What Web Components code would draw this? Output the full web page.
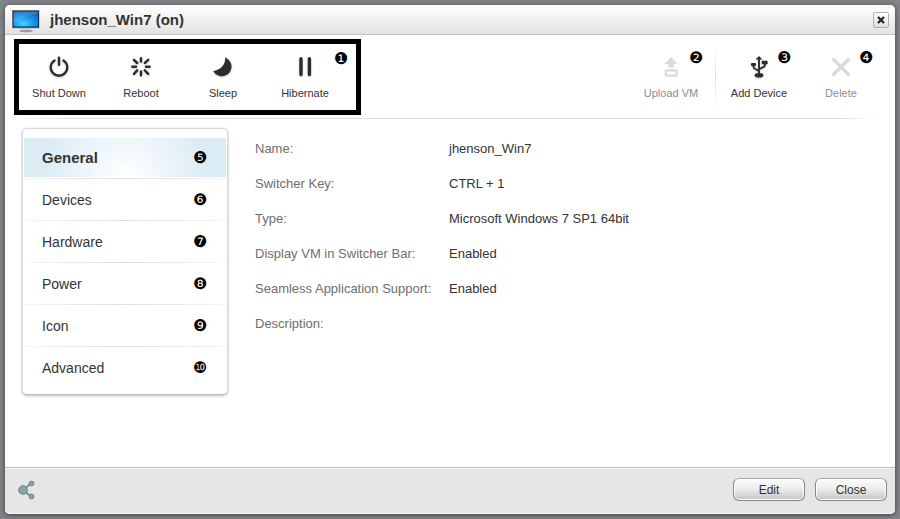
<!DOCTYPE html>
<html lang="en">
<head>
<meta charset="utf-8">
<title>jhenson_Win7 (on)</title>
<style>
html, body { height: 100%; }
body { margin: 0; font-family: "Liberation Sans", Arial, sans-serif; color: #333; background: #828387; }
</style>
</head>
<body>
<vm-window caption="jhenson_Win7 (on)">
  <vm-toolbar slot="toolbar">
    <vm-action icon="power" slot="power">Shut Down</vm-action>
    <vm-action icon="reboot" slot="power">Reboot</vm-action>
    <vm-action icon="sleep" slot="power">Sleep</vm-action>
    <vm-action icon="pause" slot="power">Hibernate</vm-action>
    <vm-badge slot="mark">❶</vm-badge>
    <vm-action icon="upload" mark="❷" disabled slot="publish">Upload VM</vm-action>
    <vm-action icon="usb" mark="❸" slot="manage">Add Device</vm-action>
    <vm-action icon="delete" mark="❹" disabled slot="manage">Delete</vm-action>
  </vm-toolbar>
  <vm-menu slot="menu">
    <vm-menu-item mark="❺" selected>General</vm-menu-item>
    <vm-menu-item mark="❻">Devices</vm-menu-item>
    <vm-menu-item mark="❼">Hardware</vm-menu-item>
    <vm-menu-item mark="❽">Power</vm-menu-item>
    <vm-menu-item mark="❾">Icon</vm-menu-item>
    <vm-menu-item mark="❿">Advanced</vm-menu-item>
  </vm-menu>
  <vm-details>
    <vm-field label="Name:">jhenson_Win7</vm-field>
    <vm-field label="Switcher Key:">CTRL + 1</vm-field>
    <vm-field label="Type:">Microsoft Windows 7 SP1 64bit</vm-field>
    <vm-field label="Display VM in Switcher Bar:">Enabled</vm-field>
    <vm-field label="Seamless Application Support:">Enabled</vm-field>
    <vm-field label="Description:"></vm-field>
  </vm-details>
  <vm-button slot="buttons">Edit</vm-button>
  <vm-button slot="buttons">Close</vm-button>
</vm-window>

<script>
const ICONS = {
  power: `<path d="M7.6 5.4A8.3 8.3 0 1 0 16.4 5.4" fill="none" stroke="currentColor" stroke-width="2.3" stroke-linecap="round"/><path d="M12 2.8V9.8" stroke="currentColor" stroke-width="2.4" stroke-linecap="round"/>`,
  reboot: `<g stroke="currentColor" stroke-width="2.5" stroke-linecap="round"><path d="M12 3.2V6.6M12 16.6V20.2M3.4 11.8H7M17 11.8H20.6"/><path d="M5 4.8L8.2 8M15.8 15.4L19.2 18.8M19.2 4.8L15.8 8M8.2 15.4L5 18.8"/></g>`,
  sleep: `<path d="M14 2.400A9.700 9.700 0 1 1 2.200 16C7.500 16 15.500 10.500 14 2.400Z" fill="currentColor"/>`,
  pause: `<path d="M8 3.700V19.500M16.400 3.700V19.500" stroke="currentColor" stroke-width="3.400" stroke-linecap="round"/>`,
  upload: `<path d="M12 2L18.500 9H14.700V12.500H9.300V9H5.500Z" fill="currentColor"/><rect x="6.700" y="15.300" width="11" height="5.400" rx="1" fill="none" stroke="currentColor" stroke-width="2.300"/>`,
  usb: `<path d="M12 1L15.400 4.600H8.600Z" fill="currentColor"/><path d="M12 4V20M6.500 9.500V11.500Q6.500 13.200 8.200 14L12 15.800M18 7.500V9.500Q18 11.400 16.200 12.200L12 14.200" fill="none" stroke="currentColor" stroke-width="1.900"/><rect x="14.800" y="5.800" width="5.800" height="3.400" rx=".6" fill="currentColor"/><rect x="4" y="8" width="5" height="3" rx="1" fill="currentColor"/><ellipse cx="12" cy="20.300" rx="4.400" ry="2.300" fill="currentColor"/>`,
  delete: `<path d="M4.500 4.500L19.500 19.500M19.500 4.500L4.500 19.500" stroke="currentColor" stroke-width="3.400" stroke-linecap="round"/>`
};

class VmElement extends HTMLElement {
  connectedCallback() {
    if (!this.shadowRoot) this.attachShadow({ mode: 'open' }).innerHTML = this.view();
  }
}

customElements.define('vm-badge', class extends VmElement {
  view() {
    return `<style>
      :host { display: block; width: 14px; text-align: center; color: #000;
        font: 400 16px/14px "DejaVu Sans", sans-serif; }
    </style><slot></slot>`;
  }
});

customElements.define('vm-action', class extends VmElement {
  view() {
    const off = this.hasAttribute('disabled');
    const mark = this.getAttribute('mark');
    return `<style>
      :host { display: block; position: relative; width: 80px; }
      button { display: flex; flex-direction: column; align-items: center; gap: 7px; width: 100%;
        margin: 0; padding: 11px 0 0; border: 0; background: none; color: #333; font: 11px/14px "Liberation Sans", Arial, sans-serif; white-space: nowrap; }
      button:disabled { color: #8d8d8d; }
      svg { display: block; width: 24px; height: 24px; color: #2c2c2c; filter: drop-shadow(0 1px 1px #0003); }
      button:disabled svg { color: #dadada; filter: none; }
      vm-badge { position: absolute; top: 7px; left: 58px; }
    </style>
    <button type="button" ${off ? 'disabled' : ''}><svg viewBox="0 0 24 24" aria-hidden="true">${ICONS[this.getAttribute('icon')]}</svg><span><slot></slot></span></button>
    ${mark ? `<vm-badge>${mark}</vm-badge>` : ''}`;
  }
});

customElements.define('vm-toolbar', class extends VmElement {
  view() {
    return `<style>
      :host { display: block; padding: 4px 14px 0 9px; }
      .row { display: flex; justify-content: space-between; align-items: stretch; }
      .frame { position: relative; display: flex; gap: 2px; padding-right: 11px; border: 5px solid #000; height: 66px; }
      .mark { position: absolute; top: 8px; right: 8px; }
      .right { display: flex; padding-top: 5px; }
      .publish { padding-right: 4px; }
      .manage { display: flex; gap: 2px; padding-left: 3px; }
      .bar { width: 1px; margin-bottom: 4px; background: linear-gradient(#fff, #e0e0e0 50%, #fff); }
      .line { height: 1px; margin: 3px 0 0 5px; background: linear-gradient(90deg, #fff, #ddd 5%, #ddd 95%, #fff); }
    </style>
    <div class="row">
      <div class="frame"><slot name="power"></slot><div class="mark"><slot name="mark"></slot></div></div>
      <div class="right"><div class="publish"><slot name="publish"></slot></div><div class="bar"></div><div class="manage"><slot name="manage"></slot></div></div>
    </div>
    <div class="line"></div>`;
  }
});

customElements.define('vm-menu', class extends VmElement {
  view() {
    return `<style>
      :host { display: block; box-sizing: border-box; width: 206px; padding: 9px 1px 4px; border: 1px solid #d9d9d9; border-bottom-color: #bbb;
        border-radius: 5px; background: #fff; box-shadow: 0 1px 3px #0004; }
      nav { display: block; }
    </style><nav><slot></slot></nav>`;
  }
});

customElements.define('vm-menu-item', class extends VmElement {
  view() {
    return `<style>
      :host { display: block; padding-bottom: 3px; background: linear-gradient(90deg, #f6f6f6, #dedede 50%, #f6f6f6) 0 40px / 100% 1px no-repeat; }
      :host(:last-child) { background: none; }
      a { display: flex; align-items: center; justify-content: space-between; height: 39px; padding: 0 19px 0 18px;
        color: #333; font-size: 14px; line-height: 18px; text-decoration: none; }
      :host([selected]) a { font-size: 15px; font-weight: bold; background: radial-gradient(circle at 50% 100%, #fff, #dcecf5 80px); }
    </style>
    <a href="#"><span><slot></slot></span><vm-badge>${this.getAttribute('mark')}</vm-badge></a>`;
  }
});

customElements.define('vm-details', class extends VmElement {
  view() {
    return `<style>:host { display: block; }</style><slot></slot>`;
  }
});

customElements.define('vm-field', class extends VmElement {
  view() {
    return `<style>
      :host { display: grid; grid-template-columns: 184px 1fr; column-gap: 10px; height: 35px; font-size: 13px; line-height: 18px; white-space: nowrap; }
      .label { color: #6e6e6e; }
    </style>
    <span class="label">${this.getAttribute('label')}</span><span><slot></slot></span>`;
  }
});

customElements.define('vm-button', class extends VmElement {
  view() {
    return `<style>
      :host { display: block; }
      button { box-sizing: border-box; width: 72px; height: 23px; margin: 0; padding: 0; border: 1px solid #868686; border-top-color: #aaa; border-radius: 6px;
        background: linear-gradient(#fdfdfd, #eceded 45%, #c3c6c9); box-shadow: inset 0 0 0 1px #fff; color: #333; font: 12px/18px "Liberation Sans", Arial, sans-serif; }
    </style><button type="button"><slot></slot></button>`;
  }
});

customElements.define('vm-window', class extends VmElement {
  view() {
    return `<style>
      :host { display: flex; box-sizing: border-box; min-height: 100vh; padding: 5px; }
      .window { display: flex; flex: 1; flex-direction: column; border-radius: 5px; background: #fff; box-shadow: 0 1px 5px #0008; }
      header { display: flex; align-items: center; gap: 9px; height: 29px; padding: 0 6px; border-bottom: 1px solid #c4c4c4; border-radius: 5px 5px 0 0;
        background: linear-gradient(#fff, #e2e2e2); }
      header svg.screen { width: 30px; height: 26px; }
      h1 { flex: 1; margin: 0; font-size: 15px; line-height: 18px; font-weight: bold; }
      .x { display: flex; align-items: center; justify-content: center; width: 16px; height: 16px; margin: 0; padding: 0; border: 1px solid #aeaeae; border-radius: 2px;
        background: linear-gradient(#fff, #dedede); box-sizing: border-box; }
      main { display: flex; flex: 1; align-items: flex-start; gap: 27px; padding: 9px 17px; }
      .details { flex: 1; padding-top: 12px; }
      footer { display: flex; box-sizing: border-box; align-items: center; gap: 10px; height: 47px; padding: 0 8px 3px 12px; border-top: 1px solid #bcbcbc; border-radius: 0 0 5px 5px;
        background: #e6e6e6; box-shadow: inset 0 1px #f6f6f6, inset 0 -1px #f6f6f6; }
      .share { display: block; margin: 0 auto 0 0; padding: 0; border: 0; background: none; }
      .share svg { display: block; }
    </style>
    <section class="window">
      <header>
        <svg class="screen" viewBox="0 0 30 26" aria-hidden="true">
          <defs><radialGradient id="glow" cx=".4" cy=".8" r=".85"><stop offset="0" stop-color="#4fd4ff"/><stop offset=".45" stop-color="#169cf0"/><stop offset="1" stop-color="#0860c4"/></radialGradient></defs>
          <ellipse cx="15" cy="24" rx="7" ry="1.300" fill="#9b9b9b"/><path d="M11 21H19V22.500H11Z" fill="#d4d4d4"/>
          <path d="M1 3H28.500V21.500H1Z" fill="#aab3bb"/><path d="M1.500 3.500H28V20.700H1.500Z" fill="#1d2f45"/><path d="M2.600 4.500H27V19.500H2.600Z" fill="url(#glow)"/>
          <path d="M2.600 4.500H27V7Q15 8 2.600 16Z" fill="#fff" opacity=".14"/>
        </svg>
        <h1>${this.getAttribute('caption')}</h1>
        <button class="x" type="button" aria-label="Close window"><svg width="8" height="8" viewBox="0 0 8 8"><path d="M1 1L7 7M7 1L1 7" stroke="#222" stroke-width="2.200"/></svg></button>
      </header>
      <slot name="toolbar"></slot>
      <main><slot name="menu"></slot><div class="details"><slot></slot></div></main>
      <footer>
        <button class="share" type="button" aria-label="Share"><svg width="19" height="20" viewBox="0 0 19 20"><path d="M14 3.500L6 10L14 16.500" fill="none" stroke="#76878f" stroke-width="1.700"/><g fill="#8da3ad" stroke="#6f828b" stroke-width="1"><circle cx="6" cy="10" r="4.300"/><circle cx="14.500" cy="3.500" r="2.400"/><circle cx="14.500" cy="16.500" r="2.400"/></g></svg></button>
        <slot name="buttons"></slot>
      </footer>
    </section>`;
  }
});
</script>
</body>
</html>
